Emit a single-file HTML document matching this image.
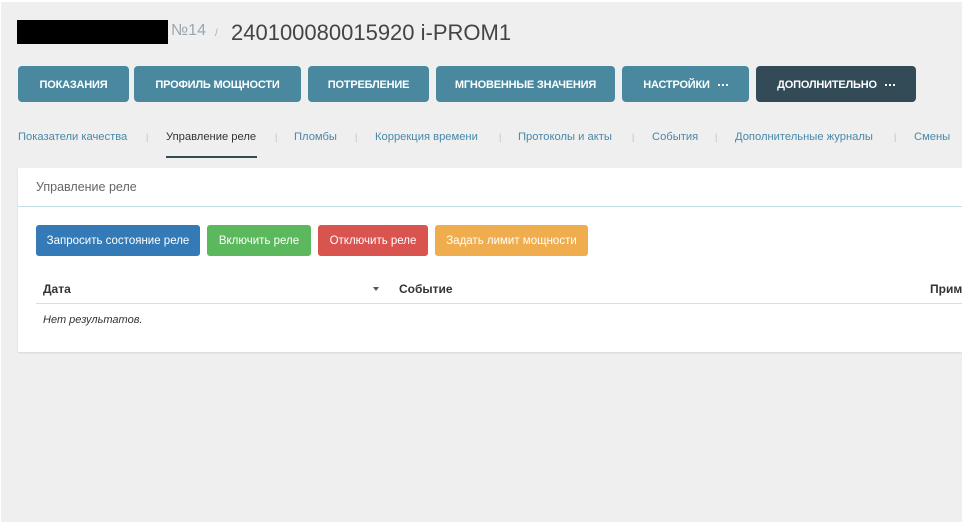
<!DOCTYPE html>
<html><head><meta charset="utf-8"><style>
*{box-sizing:border-box;margin:0;padding:0}
body{width:962px;height:522px;background:#efefef;font-family:"Liberation Sans","DejaVu Sans",sans-serif;position:relative;overflow:hidden}
.a{position:absolute;white-space:nowrap}
.nb{position:absolute;top:66px;height:36px;background:#4a88a0;color:#fff;border-radius:4px;font-size:11px;font-weight:bold;display:flex;align-items:center;justify-content:center;letter-spacing:-0.2px;padding-top:1px}
.dots{display:inline-block;width:10px;border-top:2px dotted #fff;margin-left:8px;vertical-align:middle}
.tab{position:absolute;top:131px;font-size:11.2px;color:#4a88a8}
.sep{position:absolute;top:132px;font-size:9px;color:#bbb}
.b{position:absolute;top:225px;height:31px;border-radius:3px;color:#fff;font-size:11.5px;display:flex;align-items:center;justify-content:center}
</style></head><body>
<div class="a" style="left:0;top:0;width:962px;height:2px;background:#fff"></div>
<div class="a" style="left:0;top:0;width:1px;height:522px;background:#fff"></div>
<div class="a" style="left:17px;top:20px;width:151px;height:24px;background:#000"></div>
<div class="a" style="left:171px;top:22px;font-size:16px;color:#9aa7b0">№14</div>
<div class="a" style="left:215px;top:28px;font-size:10px;color:#aaa">/</div>
<div class="a" style="left:231px;top:20px;font-size:22px;color:#444">240100080015920 i-PROM1</div>

<div class="nb" style="left:18px;width:111px">ПОКАЗАНИЯ</div>
<div class="nb" style="left:134px;width:167px">ПРОФИЛЬ МОЩНОСТИ</div>
<div class="nb" style="left:308px;width:121px">ПОТРЕБЛЕНИЕ</div>
<div class="nb" style="left:436px;width:179px">МГНОВЕННЫЕ ЗНАЧЕНИЯ</div>
<div class="nb" style="left:622px;width:127px">НАСТРОЙКИ<span class="dots"></span></div>
<div class="nb" style="left:756px;width:160px;background:#324b56">ДОПОЛНИТЕЛЬНО<span class="dots"></span></div>

<div class="tab" style="left:18px">Показатели качества</div>
<div class="sep" style="left:146px">|</div>
<div class="tab" style="left:166px;color:#333">Управление реле</div>
<div class="a" style="left:166px;top:156px;width:91px;height:2px;background:#324b56"></div>
<div class="sep" style="left:275px">|</div>
<div class="tab" style="left:294px">Пломбы</div>
<div class="sep" style="left:355px">|</div>
<div class="tab" style="left:375px">Коррекция времени</div>
<div class="sep" style="left:499px">|</div>
<div class="tab" style="left:518px">Протоколы и акты</div>
<div class="sep" style="left:632px">|</div>
<div class="tab" style="left:652px">События</div>
<div class="sep" style="left:715px">|</div>
<div class="tab" style="left:735px">Дополнительные журналы</div>
<div class="sep" style="left:894px">|</div>
<div class="tab" style="left:914px">Смены</div>

<div class="a" style="left:18px;top:168px;width:944px;height:184px;background:#fff;box-shadow:0 1px 2px rgba(0,0,0,.1)"></div>
<div class="a" style="left:36px;top:180px;font-size:12.5px;color:#666">Управление реле</div>
<div class="a" style="left:18px;top:206px;width:944px;height:1px;background:#c5dfe8"></div>

<div class="b" style="left:36px;width:164px;background:#337ab7">Запросить состояние реле</div>
<div class="b" style="left:207px;width:104px;background:#5cb85c">Включить реле</div>
<div class="b" style="left:318px;width:110px;background:#d9534f">Отключить реле</div>
<div class="b" style="left:435px;width:153px;background:#f0ad4e">Задать лимит мощности</div>

<div class="a" style="left:43px;top:282px;font-size:12px;font-weight:bold;color:#333">Дата</div>
<div class="a" style="left:373px;top:287px;width:0;height:0;border-left:3px solid transparent;border-right:3px solid transparent;border-top:4px solid #555"></div>
<div class="a" style="left:399px;top:282px;font-size:12px;font-weight:bold;color:#333">Событие</div>
<div class="a" style="left:930px;top:282px;font-size:12px;font-weight:bold;color:#333">Прим</div>
<div class="a" style="left:36px;top:303px;width:926px;height:1px;background:#ddd"></div>
<div class="a" style="left:43px;top:314px;font-size:11px;font-style:italic;color:#333">Нет результатов.</div>
</body></html>
